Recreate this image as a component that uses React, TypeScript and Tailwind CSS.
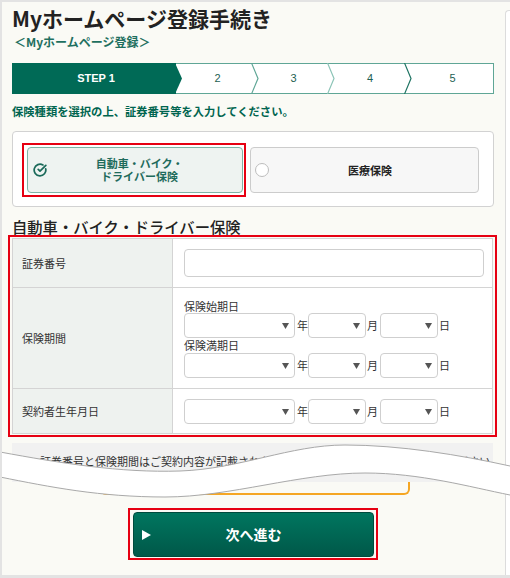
import { CircleCheckBig } from 'lucide-react';

const steps = [
  { label: '2', width: 'w-[76px]', line: '#5fa696' },
  { label: '3', width: 'w-[76px]', line: '#8cc4b7' },
  { label: '4', width: 'w-[77px]', line: '#1f7463' },
];

function Caret() {
  return (
    <svg width="7" height="6" viewBox="0 0 7 6" className="absolute right-[5px] top-1/2 -translate-y-1/2">
      <polygon points="0,0 7,0 3.5,6" fill="#555" />
    </svg>
  );
}

function Select({ className }: { className: string }) {
  return <div className={`relative h-[25px] rounded-[4px] border border-[#cfcfcf] bg-white ${className}`}><Caret /></div>;
}

function DateRow() {
  return (
    <div className="flex items-center text-[11px] text-[#333]">
      <Select className="w-[111px]" />
      <span className="w-[13px] pl-[2px]">年</span>
      <Select className="w-[58px]" />
      <span className="w-[14px] pl-[1px]">月</span>
      <Select className="w-[58px]" />
      <span className="pl-[1px]">日</span>
    </div>
  );
}

function StepBar() {
  return (
    <div className="flex h-[31px] w-[482px] mt-[13px]">
      <div className="relative w-[164px] bg-[#006a56] flex items-center justify-center pl-[4px] text-white text-[11px] font-bold font-['Liberation_Sans',sans-serif]">
        STEP 1
        <svg width="8" height="31" viewBox="0 0 8 31" className="absolute right-[-7px] top-0 z-10">
          <polygon points="0,0 7,15.5 0,31" fill="#006a56" />
        </svg>
      </div>
      {steps.map((s) => (
        <div key={s.label} className={`relative ${s.width} pl-[7px] border-y border-[#5fa696] bg-white flex items-center justify-center text-[11px] text-[#1d5f52] font-['Liberation_Sans',sans-serif]`}>
          {s.label}
          <svg width="8" height="31" viewBox="0 0 8 31" className="absolute right-[-7px] top-[-1px] z-10">
            <polyline points="0.5,0 7,15.5 0.5,31" fill="none" stroke={s.line} strokeWidth="1.2" />
          </svg>
        </div>
      ))}
      <div className="flex-1 pl-[7px] border-y border-r border-[#5fa696] bg-white flex items-center justify-center text-[11px] text-[#1d5f52] font-['Liberation_Sans',sans-serif]">
        5
      </div>
    </div>
  );
}

export default function App() {
  return (
    <div className="relative flex w-[510px] h-[578px] overflow-hidden bg-[#fafaf5] border-t-2 border-l-2 border-b-[3px] border-[#e3e3e3] font-['Noto_Sans_CJK_JP','Noto_Sans',sans-serif]">
      <div className="flex-1 pl-[10px] pt-[6px]">
        <h1 className="text-[21px] leading-[21px] font-bold text-[#222]">Myホームページ登録手続き</h1>
        <p className="mt-[5px] pl-[2px] text-[12px] leading-[16px] font-bold text-[#1e7060]">＜Myホームページ登録＞</p>

        <StepBar />

        <p className="mt-[10px] text-[11.3px] leading-[14px] font-bold text-[#00654f]">保険種類を選択の上、証券番号等を入力してください。</p>

        <div className="mt-[13px] w-[482px] rounded-[4px] border border-[#d2d2d2] bg-white px-[14px] pt-[15px] pb-[13px] flex gap-[7px]">
          <div className="relative flex-1">
            <div className="relative h-[46px] rounded-[4px] border border-[#7fb3a6] bg-[#eef3f1] flex items-center justify-center pl-[9px]">
              <CircleCheckBig size={14} strokeWidth={3} color="#1b6a5a" className="absolute left-[5px] top-1/2 -translate-y-1/2" />
              <span className="text-center text-[11px] leading-[13px] font-bold text-[#1e6b5c]">
                自動車・バイク・
                <br />
                ドライバー保険
              </span>
            </div>
            <div className="absolute left-[-5px] top-[-4px] right-[-3px] bottom-[-4px] border-2 border-[#e60012]" />
          </div>
          <div className="relative flex-1 h-[46px] rounded-[4px] border border-[#cccccc] bg-[#f7f7f7] flex items-center justify-center pl-[11px]">
            <span className="absolute left-[4px] top-1/2 -translate-y-1/2 w-[14px] h-[14px] rounded-full border-[1.5px] border-[#bdbdbd] bg-white" />
            <span className="text-[11px] font-bold text-[#222]">医療保険</span>
          </div>
        </div>

        <h2 className="mt-[10px] text-[15.3px] leading-[18px] font-medium text-[#222]">自動車・バイク・ドライバー保険</h2>

        <div className="relative mt-[3px] w-[481px] border border-[#d4d4d4] bg-white text-[11px] text-[#333]">
          <div className="flex border-b border-[#d4d4d4]">
            <div className="w-[160px] shrink-0 border-r border-[#d4d4d4] bg-[#eef2ef] pl-[9px] flex items-center">証券番号</div>
            <div className="flex-1 pl-[11px] pr-[8px] py-[10px]">
              <div className="h-[28px] rounded-[4px] border border-[#cfcfcf] bg-white" />
            </div>
          </div>
          <div className="flex border-b border-[#d4d4d4]">
            <div className="w-[160px] shrink-0 border-r border-[#d4d4d4] bg-[#eef2ef] pl-[9px] flex items-center">保険期間</div>
            <div className="flex-1 pl-[11px] pt-[11px] pb-[10px]">
              <div className="leading-[14px]">保険始期日</div>
              <DateRow />
              <div className="leading-[15px]">保険満期日</div>
              <DateRow />
            </div>
          </div>
          <div className="flex">
            <div className="w-[160px] shrink-0 border-r border-[#d4d4d4] bg-[#eef2ef] pl-[9px] flex items-center">契約者生年月日</div>
            <div className="flex-1 pl-[11px] pt-[10px] pb-[9px]">
              <DateRow />
            </div>
          </div>
          <div className="absolute left-[-5px] top-[-4px] right-[-5px] bottom-[-4px] border-2 border-[#e60012]" />
        </div>

        <div className="mt-[9px] w-[481px] h-[39px] bg-[#f1f1f1] pl-[28px] pt-[11px] text-[11px] leading-[14px] text-[#333]">
          証券番号と保険期間はご契約内容が記載された保険証券等でご確認のうえ入力してください
        </div>
        <div className="ml-[88px] w-[310px] h-[13px] border-2 border-t-0 border-[#f5a623] rounded-b-[6px]" />

        <div className="relative mt-[17px] ml-[121px] w-[241px]">
          <div className="relative h-[45px] rounded-[4px] border border-[#004a3d] bg-gradient-to-b from-[#00765f] to-[#005849] flex items-center justify-center">
            <svg width="9" height="10" viewBox="0 0 9 10" className="absolute left-[8px] top-1/2 -translate-y-1/2">
              <polygon points="0,0 9,5 0,10" fill="#fff" />
            </svg>
            <span className="text-[14px] font-bold text-white">次へ進む</span>
          </div>
          <div className="absolute left-[-5px] top-[-4px] right-[-4px] bottom-[-3px] border-2 border-[#e60012]" />
        </div>
      </div>
      <div className="w-[5px] mt-[8px] border-l border-t border-[#dcdcdc] rounded-tl-[4px] bg-white" />

      <svg width="510" height="70" viewBox="0 0 510 70" className="absolute top-[433px] left-[-2px]">
        <path
          d="M0,17 C60,28 120,38 180,36 C240,34 290,10 345,10 C400,10 460,20 510,31 L510,60 C470,52 420,38 365,38 C300,38 230,62 165,62 C100,62 50,52 0,42 Z"
          fill="#ffffff"
        />
        <path d="M0,17 C60,28 120,38 180,36 C240,34 290,10 345,10 C400,10 460,20 510,31" fill="none" stroke="#a9a9a9" strokeWidth="1" />
        <path d="M0,42 C50,52 100,62 165,62 C230,62 300,38 365,38 C420,38 470,52 510,60" fill="none" stroke="#a9a9a9" strokeWidth="1" />
      </svg>
    </div>
  );
}
